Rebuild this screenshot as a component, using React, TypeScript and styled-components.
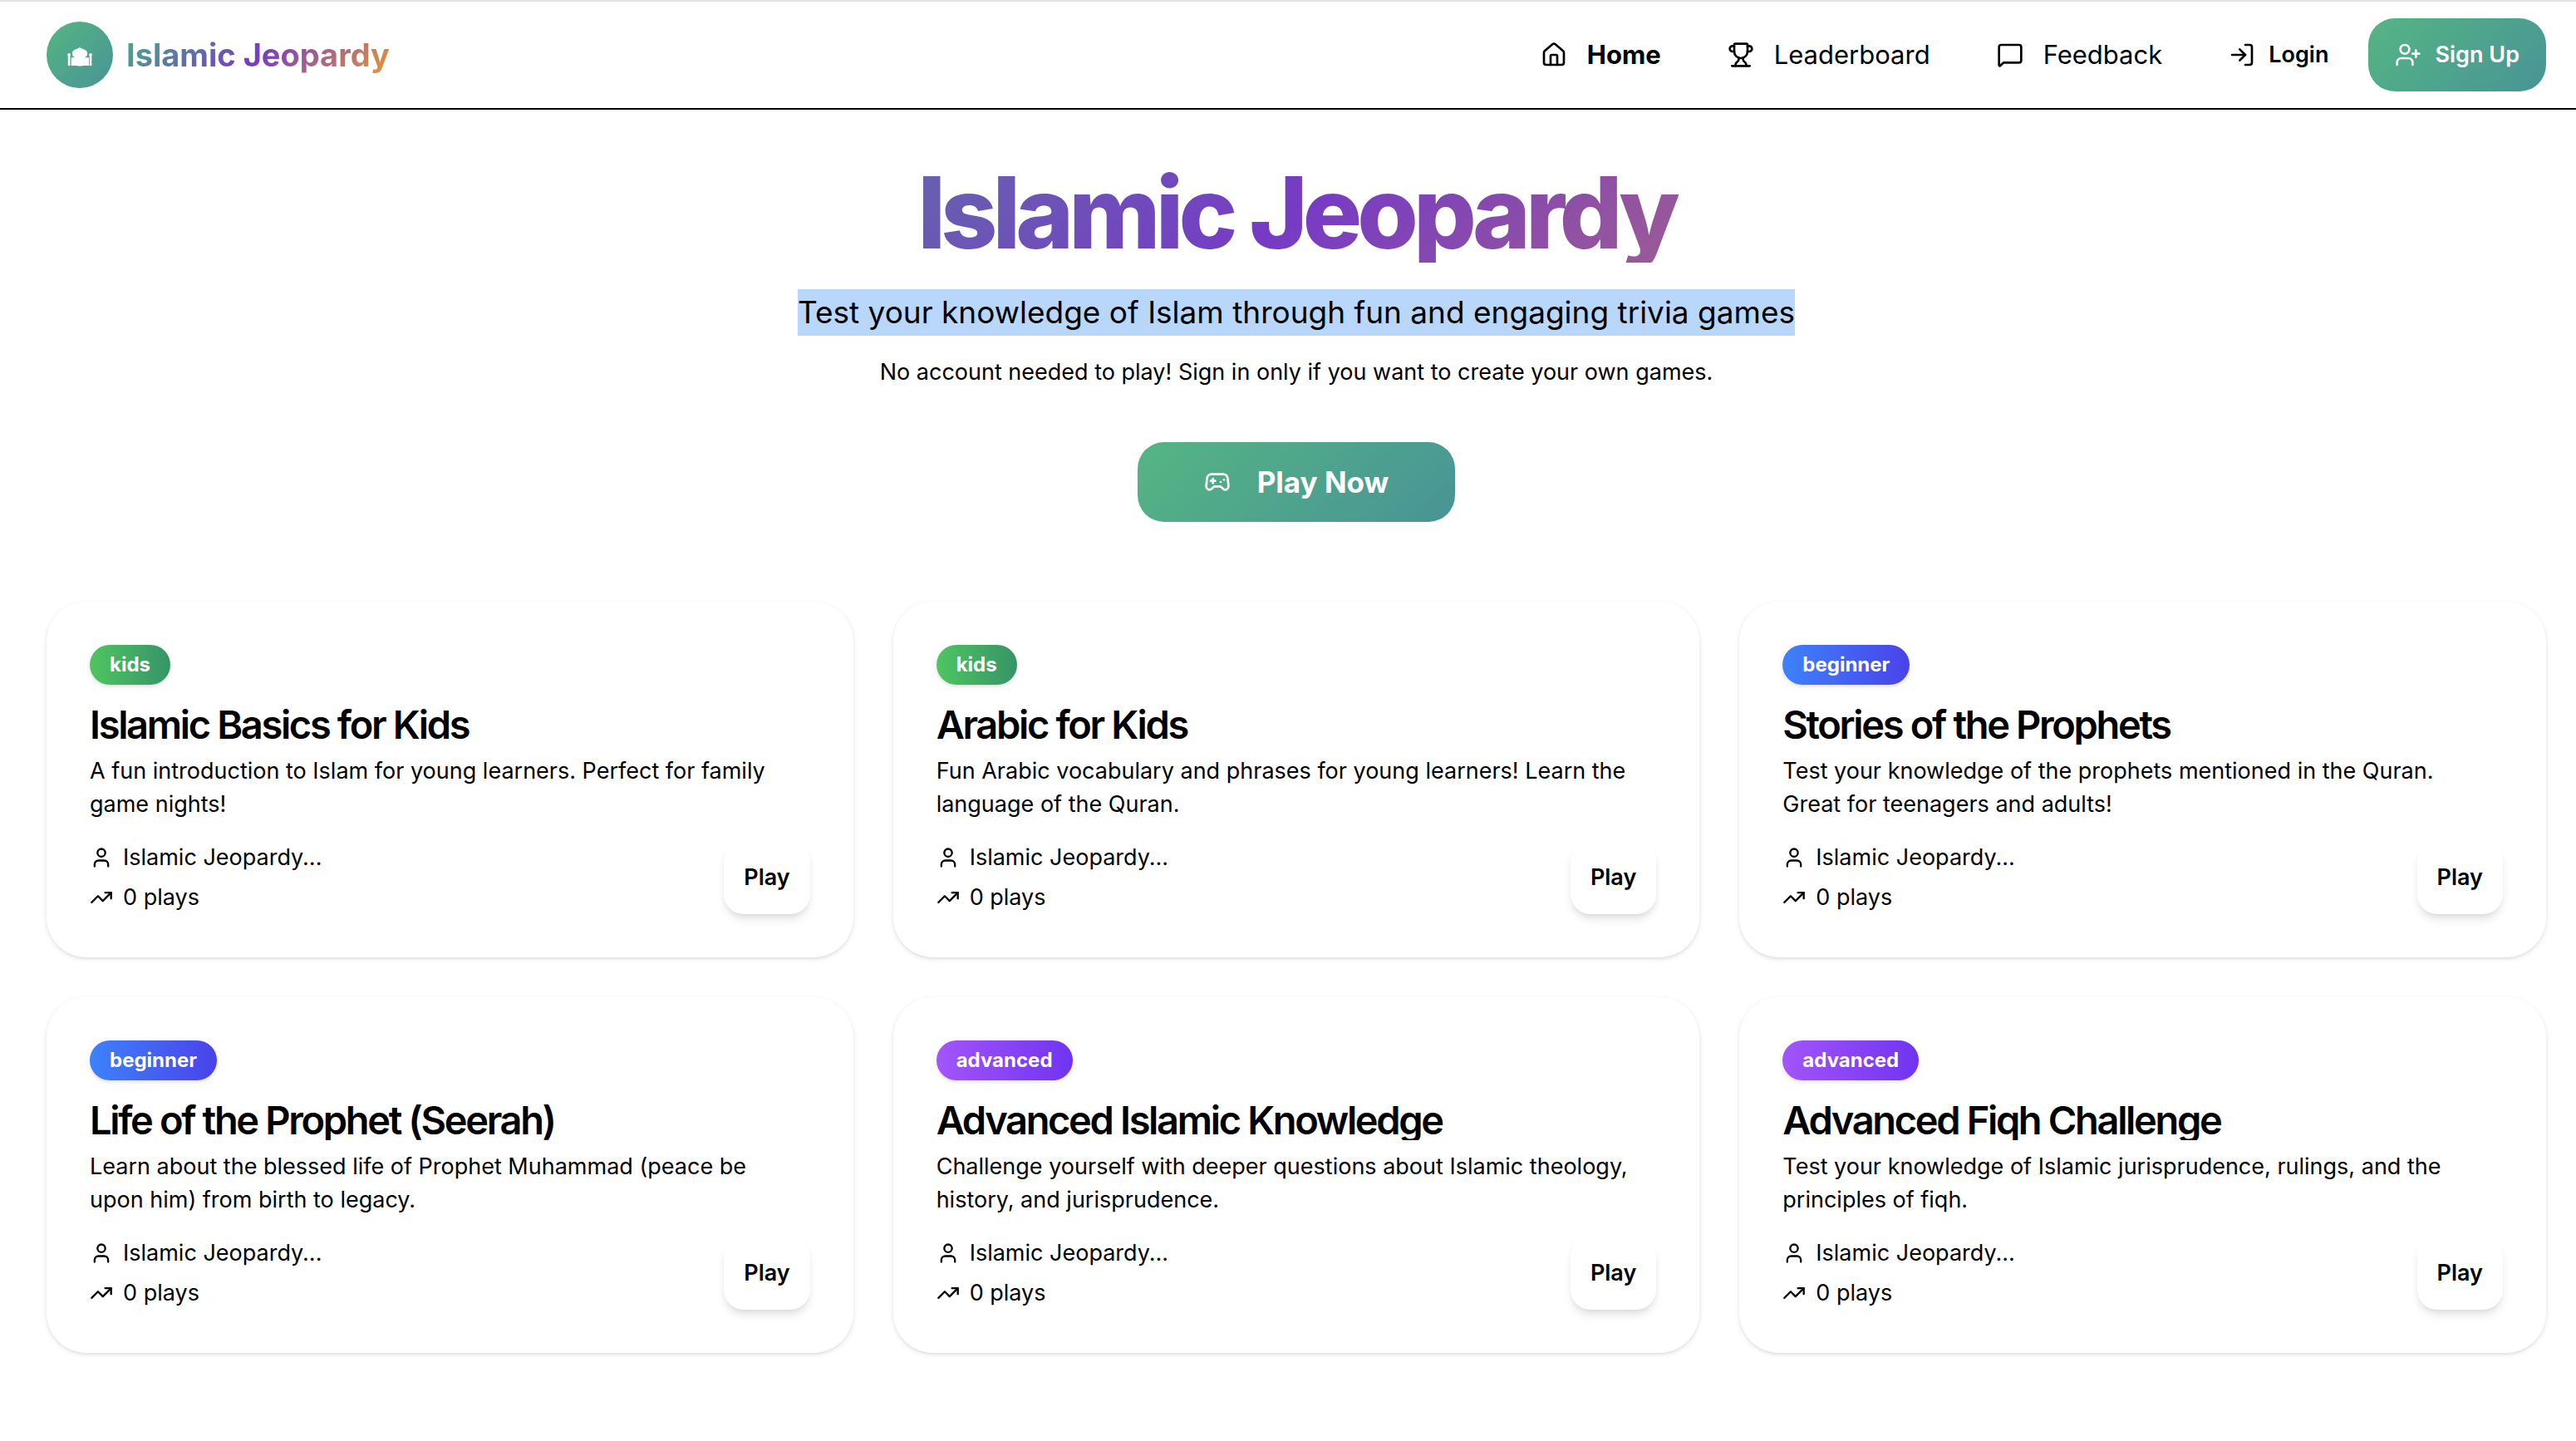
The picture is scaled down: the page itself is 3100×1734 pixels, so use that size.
import React from "react";
import styled, { createGlobalStyle, css } from "styled-components";
import {
  Gamepad2,
  House,
  LogIn,
  MessageSquare,
  TrendingUp,
  Trophy,
  User,
  UserPlus,
} from "lucide-react";

const brandGradient = "linear-gradient(135deg, #55b583 0%, #489496 100%)";
const titleGradient =
  "linear-gradient(135deg, #48b083 0%, #763bc4 50%, #e79c33 100%)";

const GlobalStyle = createGlobalStyle`
  *, *::before, *::after { box-sizing: border-box; }
  body {
    margin: 0;
    background: #ffffff;
    color: #000000;
    font-family: Inter, "Liberation Sans", sans-serif;
    font-size: 27px;
    line-height: 40px;
    -webkit-font-smoothing: antialiased;
  }
  h1, h2, p, ul { margin: 0; padding: 0; }
  a { color: inherit; text-decoration: none; }
  button { font: inherit; color: inherit; border: 0; cursor: pointer; }
`;

const Header = styled.header`
  display: flex;
  align-items: center;
  justify-content: space-between;
  padding: 20px 36px 20px 56px;
  border-top: 2px solid #e2e2e2;
  border-bottom: 2px solid #000000;
`;

const Brand = styled.a`
  display: flex;
  align-items: center;
  gap: 16px;
`;

const BrandMark = styled.span`
  display: grid;
  place-items: center;
  width: 80px;
  height: 80px;
  border-radius: 50%;
  background: ${brandGradient};
  color: #ffffff;
`;

const gradientText = css`
  background-image: ${titleGradient};
  background-clip: text;
  -webkit-background-clip: text;
  color: transparent;
`;

const BrandName = styled.span`
  ${gradientText}
  font-size: 38px;
  line-height: 56px;
  font-weight: 700;
`;

const Nav = styled.nav`
  display: flex;
  align-items: center;
  gap: 16px;
`;

const NavLink = styled.a<{ $active?: boolean }>`
  display: flex;
  align-items: center;
  gap: 24px;
  padding: 16px 32px;
  font-size: 31px;
  line-height: 48px;
  font-weight: ${(p) => (p.$active ? 700 : 400)};
`;

const AuthButton = styled.button<{ $filled?: boolean }>`
  display: flex;
  align-items: center;
  gap: 16px;
  padding: 24px 32px;
  border-radius: 32px;
  font-weight: 600;
  background: ${(p) => (p.$filled ? brandGradient : "transparent")};
  color: ${(p) => (p.$filled ? "#ffffff" : "#000000")};
`;

const Main = styled.main`
  padding: 64px 36px 106px 56px;
`;

const Hero = styled.section`
  display: flex;
  flex-direction: column;
  align-items: center;
  text-align: center;
`;

const HeroTitle = styled.h1`
  ${gradientText}
  align-self: stretch;
  font-size: 119px;
  line-height: 120px;
  font-weight: 800;
  letter-spacing: -0.05em;
`;

const Tagline = styled.p`
  margin-top: 32px;
  font-size: 37px;
  line-height: 56px;
`;

const Selected = styled.mark`
  display: block;
  background: #b9d6fb;
  color: inherit;
`;

const HeroNote = styled.p`
  margin-top: 24px;
`;

const PlayNow = styled.button`
  display: flex;
  align-items: center;
  gap: 32px;
  margin-top: 64px;
  padding: 20px 80px;
  border-radius: 32px;
  background: ${brandGradient};
  color: #ffffff;
  font-size: 35px;
  line-height: 56px;
  font-weight: 700;
`;

const GameGrid = styled.section`
  display: grid;
  grid-template-columns: repeat(3, minmax(0, 1fr));
  gap: 48px;
  margin-top: 96px;
`;

const Card = styled.article`
  display: flex;
  flex-direction: column;
  align-items: flex-start;
  padding: 52px;
  border-radius: 48px;
  background: #ffffff;
  box-shadow: 0 2px 6px rgba(0, 0, 0, 0.1), 0 2px 4px -2px rgba(0, 0, 0, 0.1);
`;

type Level = "kids" | "beginner" | "advanced";

const levelGradients: Record<Level, string> = {
  kids: "linear-gradient(90deg, #4fc560, #369468)",
  beginner: "linear-gradient(90deg, #3d82fb, #4a42ea)",
  advanced: "linear-gradient(90deg, #a255fb, #7034f0)",
};

const Badge = styled.span<{ $level: Level }>`
  padding: 8px 24px;
  border-radius: 24px;
  background: ${(p) => levelGradients[p.$level]};
  box-shadow: 0 2px 6px rgba(0, 0, 0, 0.1), 0 2px 4px -2px rgba(0, 0, 0, 0.1);
  color: #ffffff;
  font-size: 24px;
  line-height: 32px;
  font-weight: 700;
`;

const CardTitle = styled.h2`
  align-self: stretch;
  overflow: hidden;
  margin-top: 24px;
  font-size: 47px;
  line-height: 48px;
  font-weight: 600;
  letter-spacing: -0.05em;
  white-space: nowrap;
`;

const CardText = styled.p`
  margin-top: 12px;
  padding-right: 20px;
`;

const CardFooter = styled.div`
  display: flex;
  align-self: stretch;
  align-items: flex-end;
  justify-content: space-between;
  margin-top: 24px;
`;

const Stats = styled.ul`
  display: grid;
  gap: 8px;
  list-style: none;
`;

const Stat = styled.li`
  display: flex;
  align-items: center;
  gap: 12px;
`;

const PlayButton = styled.button`
  padding: 24px;
  border-radius: 24px;
  background: #ffffff;
  box-shadow: 0 8px 12px -2px rgba(0, 0, 0, 0.1), 0 4px 8px -4px rgba(0, 0, 0, 0.1);
  font-weight: 600;
`;

const games: { level: Level; title: string; text: string }[] = [
  {
    level: "kids",
    title: "Islamic Basics for Kids",
    text: "A fun introduction to Islam for young learners. Perfect for family game nights!",
  },
  {
    level: "kids",
    title: "Arabic for Kids",
    text: "Fun Arabic vocabulary and phrases for young learners! Learn the language of the Quran.",
  },
  {
    level: "beginner",
    title: "Stories of the Prophets",
    text: "Test your knowledge of the prophets mentioned in the Quran. Great for teenagers and adults!",
  },
  {
    level: "beginner",
    title: "Life of the Prophet (Seerah)",
    text: "Learn about the blessed life of Prophet Muhammad (peace be upon him) from birth to legacy.",
  },
  {
    level: "advanced",
    title: "Advanced Islamic Knowledge",
    text: "Challenge yourself with deeper questions about Islamic theology, history, and jurisprudence.",
  },
  {
    level: "advanced",
    title: "Advanced Fiqh Challenge",
    text: "Test your knowledge of Islamic jurisprudence, rulings, and the principles of fiqh.",
  },
];

function MosqueIcon() {
  return (
    <svg width="32" height="32" viewBox="0 0 32 32" fill="currentColor" aria-hidden="true">
      <path d="M16 6.700c.8 1 1.800 1.500 3.600 2.100 3.200 1.100 5.600 2.700 5.600 5.500 0 2.200-1.200 3.900-3 5H27V29h-7c-1 .6-7 .6-8 0H5.700v-9.700h4.100c-1.800-1.100-3-2.800-3-5 0-2.800 2.400-4.400 5.600-5.500 1.800-.6 2.800-1.100 3.600-2.100z" />
      <path d="M1.300 16c0-1.200.7-2 1.800-2s1.800.8 1.800 2c0 .6-.2 1-.5 1.300V29H1.800V17.300c-.3-.3-.5-.7-.5-1.300z" />
      <path d="M27.200 16c0-1.200.7-2 1.800-2s1.800.8 1.800 2c0 .6-.2 1-.5 1.300V29h-2.600V17.300c-.3-.3-.5-.7-.5-1.300z" />
    </svg>
  );
}

function GameCard({ level, title, text }: (typeof games)[number]) {
  return (
    <Card>
      <Badge $level={level}>{level}</Badge>
      <CardTitle>{title}</CardTitle>
      <CardText>{text}</CardText>
      <CardFooter>
        <Stats>
          <Stat>
            <User size={28} aria-hidden="true" />
            Islamic Jeopardy...
          </Stat>
          <Stat>
            <TrendingUp size={28} aria-hidden="true" />0 plays
          </Stat>
        </Stats>
        <PlayButton type="button">Play</PlayButton>
      </CardFooter>
    </Card>
  );
}

export default function App() {
  return (
    <>
      <GlobalStyle />
      <Header>
        <Brand href="#">
          <BrandMark>
            <MosqueIcon />
          </BrandMark>
          <BrandName>Islamic Jeopardy</BrandName>
        </Brand>
        <Nav>
          <NavLink href="#" $active>
            <House size={32} aria-hidden="true" />
            Home
          </NavLink>
          <NavLink href="#leaderboard">
            <Trophy size={32} aria-hidden="true" />
            Leaderboard
          </NavLink>
          <NavLink href="#feedback">
            <MessageSquare size={32} aria-hidden="true" />
            Feedback
          </NavLink>
          <AuthButton type="button">
            <LogIn size={32} aria-hidden="true" />
            Login
          </AuthButton>
          <AuthButton type="button" $filled>
            <UserPlus size={32} aria-hidden="true" />
            Sign Up
          </AuthButton>
        </Nav>
      </Header>
      <Main>
        <Hero>
          <HeroTitle>Islamic Jeopardy</HeroTitle>
          <Tagline>
            <Selected>Test your knowledge of Islam through fun and engaging trivia games</Selected>
          </Tagline>
          <HeroNote>
            No account needed to play! Sign in only if you want to create your own games.
          </HeroNote>
          <PlayNow type="button">
            <Gamepad2 size={32} aria-hidden="true" />
            Play Now
          </PlayNow>
        </Hero>
        <GameGrid>
          {games.map((game) => (
            <GameCard key={game.title} {...game} />
          ))}
        </GameGrid>
      </Main>
    </>
  );
}
